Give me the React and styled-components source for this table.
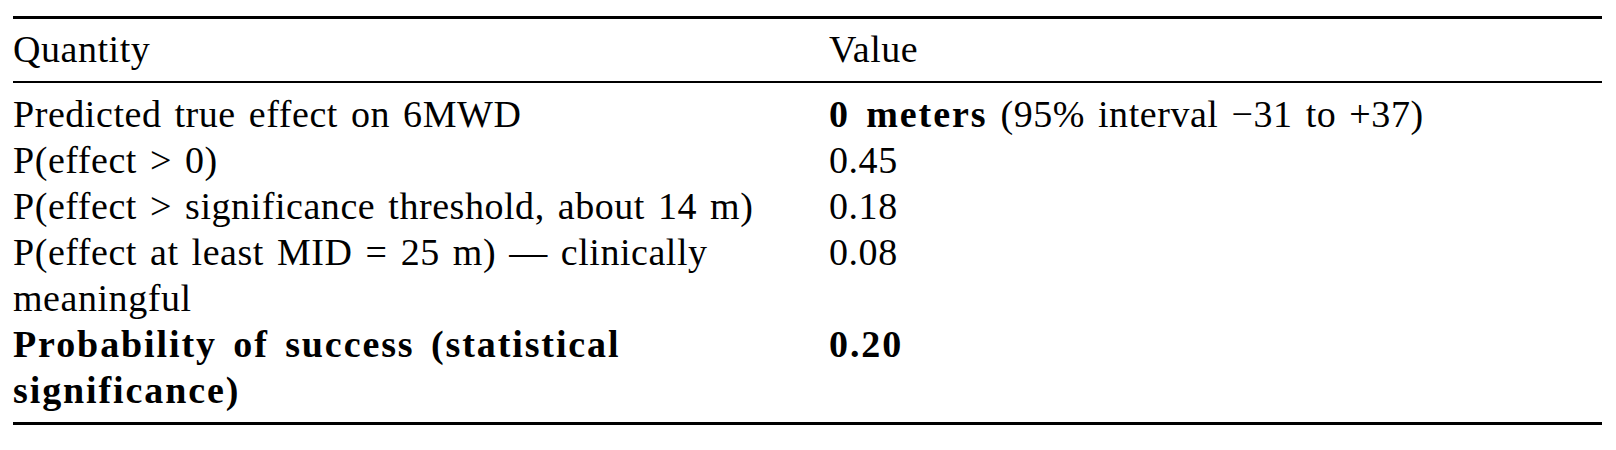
import React from "react";
import styled, { createGlobalStyle } from "styled-components";

const GlobalStyle = createGlobalStyle`
  body {
    margin: 0;
    background: #ffffff;
    color: #000000;
    font-family: "Liberation Serif", "Times New Roman", serif;
  }
`;

const Table = styled.div`
  width: 1589px;
  margin: 16px 0 0 13px;
  font-size: 38px;
  line-height: 46px;
  letter-spacing: 0.55px;
  word-spacing: 3px;
`;

const Rule = styled.div`
  height: ${(p) => (p.$heavy ? "2.8px" : "1.8px")};
  background: #000;
`;

const Head = styled.div`
  padding: 7.4px 0 8.8px;
`;

const Body = styled.div`
  padding: 8.4px 0 8.8px;
`;

const Row = styled.div`
  display: grid;
  grid-template-columns: 774px 1fr;
  column-gap: 42px;
`;

const Cell = styled.div`
  white-space: normal;
`;

const Strong = styled.span`
  font-weight: 700;
  letter-spacing: 1.9px;
  word-spacing: 5px;
`;

const rows = [
  {
    quantity: "Predicted true effect on 6MWD",
    value: (
      <>
        <Strong>0 meters</Strong> (95% interval −31 to +37)
      </>
    ),
  },
  { quantity: "P(effect > 0)", value: "0.45" },
  { quantity: "P(effect > significance threshold, about 14 m)", value: "0.18" },
  {
    quantity: "P(effect at least MID = 25 m) — clinically meaningful",
    value: "0.08",
  },
  {
    quantity: <Strong>Probability of success (statistical significance)</Strong>,
    value: <Strong>0.20</Strong>,
  },
];

const App = () => {
  return (
    <>
      <GlobalStyle />
      <Table>
        <Rule $heavy />
        <Head>
          <Row>
            <Cell>Quantity</Cell>
            <Cell>Value</Cell>
          </Row>
        </Head>
        <Rule />
        <Body>
          {rows.map((r, i) => (
            <Row key={i}>
              <Cell>{r.quantity}</Cell>
              <Cell>{r.value}</Cell>
            </Row>
          ))}
        </Body>
        <Rule $heavy />
      </Table>
    </>
  );
};

export default App;
